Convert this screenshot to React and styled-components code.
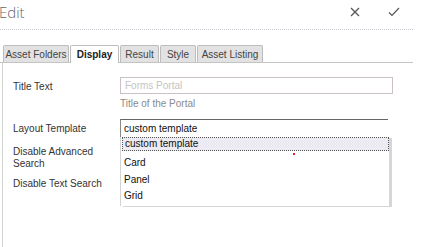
import React from "react";
import styled, { createGlobalStyle } from "styled-components";

const GlobalStyle = createGlobalStyle`
  html, body {
    margin: 0;
    padding: 0;
    background: #fff;
  }
  body {
    font-family: "Liberation Sans", Arial, sans-serif;
    color: #333;
    overflow: hidden;
  }
`;

const Header = styled.div`
  display: flex;
  align-items: center;
  height: 29px;
  width: 413px;
  border-bottom: 1px dotted #c8c8d0;
`;

const Title = styled.div`
  flex: 1;
  font-family: "Open Sans", sans-serif;
  font-size: 15px;
  font-weight: 300;
  color: #666;
  margin-left: -1px;
  margin-top: -5px;
`;

const IconButton = styled.button`
  display: flex;
  align-items: center;
  justify-content: center;
  border: 0;
  background: none;
  padding: 0;
  width: 12px;
  height: 12px;
  margin-top: -6px;
  margin-right: ${(p) => p.$gap}px;
`;

const Tabs = styled.div`
  display: flex;
  gap: 1px;
  margin-top: 15px;
  padding-left: 3px;
  width: 410px;
  height: 17px;
  border-bottom: 1px solid #c4c4c4;
`;

const Tab = styled.div`
  width: ${(p) => p.$w}px;
  height: ${(p) => (p.$active ? 18 : 17)}px;
  box-sizing: border-box;
  border: 1px solid #bdbdbd;
  border-bottom: 0;
  border-radius: 2px 2px 0 0;
  background: ${(p) => (p.$active ? "#fff" : "#e2e2e2")};
  font-size: 10px;
  font-weight: ${(p) => (p.$active ? 700 : 400)};
  color: ${(p) => (p.$active ? "#222" : "#444")};
  display: flex;
  align-items: center;
  justify-content: center;
`;

const Panel = styled.div`
  margin-left: 2px;
  border-left: 1px solid #cfd4cf;
  height: 184px;
  box-sizing: border-box;
  padding: 14px 0 0 10px;
  display: flex;
  flex-direction: column;
`;

const Row = styled.div`
  display: flex;
  margin-top: ${(p) => p.$mt || 0}px;
`;

const Label = styled.div`
  width: 107px;
  flex: none;
  font-size: 10px;
  color: #333;
  line-height: 12px;
  padding-top: ${(p) => p.$pt || 0}px;
`;

const Field = styled.div`
  position: relative;
`;

const TextInput = styled.input`
  display: block;
  box-sizing: border-box;
  width: 273px;
  height: 17px;
  margin: 0;
  border: 1px solid #c9c0c8;
  padding: 0 4px;
  font-family: inherit;
  font-size: 10px;
  color: #333;
  outline: none;
  &::placeholder {
    color: #c4c4c4;
  }
`;

const Help = styled.div`
  font-size: 10px;
  color: #8a8a8a;
  margin-top: 4px;
  line-height: 12px;
`;

const SelectBox = styled.div`
  box-sizing: border-box;
  width: 268px;
  height: 18px;
  border-top: 1px solid #666;
  border-left: 1px solid #888;
  padding: 1px 0 0 3px;
  font-size: 10px;
  color: #111;
  line-height: 15px;
`;

const Menu = styled.ul`
  position: absolute;
  left: 0;
  top: 18px;
  width: 269px;
  box-sizing: border-box;
  margin: 0;
  padding: 0 0 1px 1px;
  list-style: none;
  background: #fff;
  border-left: 1px solid #d4d4d4;
  box-shadow: 3px 1px 0 #d8d4d8;
  z-index: 2;
`;

const Option = styled.li`
  box-sizing: border-box;
  height: ${(p) => (p.$selected ? 14 : 16.5)}px;
  margin-bottom: ${(p) => (p.$selected ? 4 : 0)}px;
  padding-left: 2px;
  font-size: 10px;
  line-height: ${(p) => (p.$selected ? 12 : 16.5)}px;
  color: #111;
  background: ${(p) => (p.$selected ? "#eceaf2" : "transparent")};
  border: ${(p) => (p.$selected ? "1px dotted #555" : "0")};
`;

const Cursor = styled.span`
  position: absolute;
  left: 173px;
  top: 34px;
  width: 2px;
  height: 2px;
  background: #e02020;
  z-index: 3;
`;

function CloseIcon() {
  return (
    <svg width="10" height="10" viewBox="0 0 10 10">
      <path d="M1 1 L9 9 M9 1 L1 9" stroke="#555" strokeWidth="1.3" />
    </svg>
  );
}

function CheckIcon() {
  return (
    <svg width="12" height="10" viewBox="0 0 12 10">
      <path d="M1 5.5 L4 8.5 L11 1" stroke="#555" strokeWidth="1.2" fill="none" />
    </svg>
  );
}

const tabs = [
  { name: "Asset Folders", w: 66 },
  { name: "Display", w: 49, active: true },
  { name: "Result", w: 39 },
  { name: "Style", w: 36 },
  { name: "Asset Listing", w: 66 },
];

const options = ["custom template", "Card", "Panel", "Grid"];

export default function App() {
  return (
    <>
      <GlobalStyle />
      <Header>
        <Title>Edit</Title>
        <IconButton $gap={27}>
          <CloseIcon />
        </IconButton>
        <IconButton $gap={13}>
          <CheckIcon />
        </IconButton>
      </Header>
      <Tabs>
        {tabs.map((t) => (
          <Tab key={t.name} $w={t.w} $active={t.active}>
            {t.name}
          </Tab>
        ))}
      </Tabs>
      <Panel>
        <Row>
          <Label $pt={4}>Title Text</Label>
          <Field>
            <TextInput placeholder="Forms Portal" />
            <Help>Title of the Portal</Help>
          </Field>
        </Row>
        <Row $mt={9}>
          <Label $pt={4}>Layout Template</Label>
          <Field>
            <SelectBox>custom template</SelectBox>
            <Menu>
              {options.map((o, i) => (
                <Option key={o} $selected={i === 0}>
                  {o}
                </Option>
              ))}
            </Menu>
            <Cursor />
          </Field>
        </Row>
        <Row $mt={9}>
          <Label>
            Disable Advanced
            <br />
            Search
          </Label>
        </Row>
        <Row $mt={8}>
          <Label>Disable Text Search</Label>
        </Row>
      </Panel>
    </>
  );
}
